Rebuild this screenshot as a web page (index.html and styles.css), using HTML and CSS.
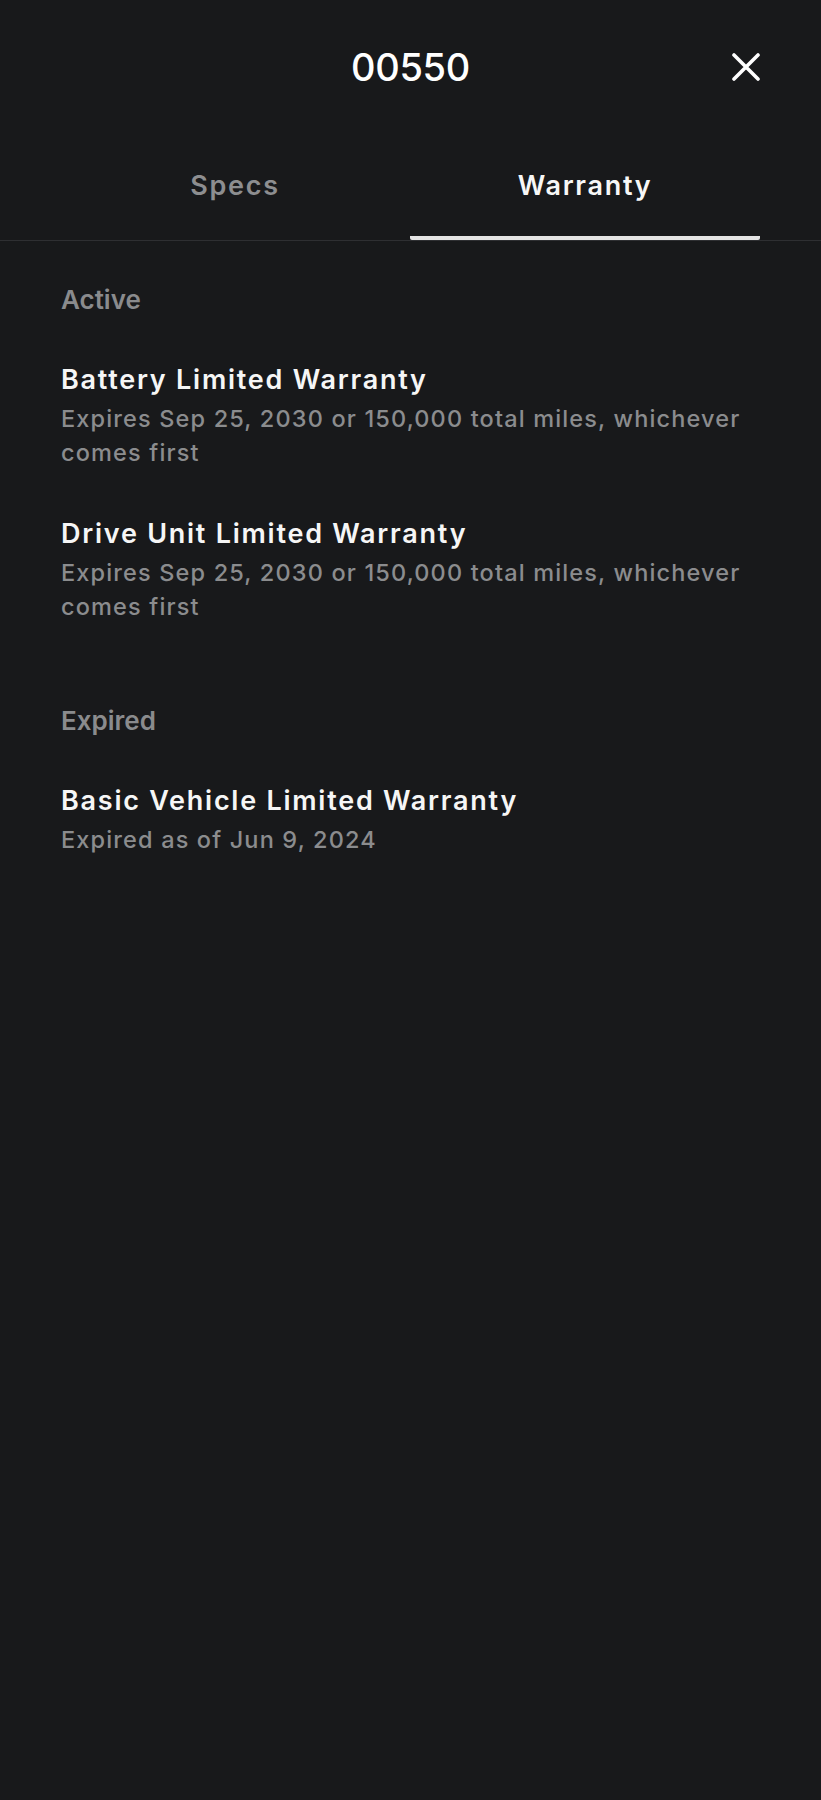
FILE: index.html
```html
<!DOCTYPE html>
<html lang="en">
<head>
<meta charset="utf-8">
<title>00550 Warranty</title>
<link rel="stylesheet" href="styles.css">
</head>
<body>
<div class="screen">
  <header class="header">
    <h1 class="title">00550</h1>
    <button class="close" aria-label="Close">
      <svg viewBox="0 0 28 28" width="28" height="28"><path d="M2 2 L26 26 M26 2 L2 26" stroke="#fff" stroke-width="3.6" stroke-linecap="round" fill="none"/></svg>
    </button>
  </header>
  <nav class="tabs">
    <div class="tab">Specs</div>
    <div class="tab tab-active">Warranty</div>
  </nav>
  <main class="content">
    <section class="section">
      <div class="section-label">Active</div>
      <div class="item">
        <div class="item-title">Battery Limited Warranty</div>
        <div class="item-desc">Expires Sep 25, 2030 or 150,000 total miles, whichever comes first</div>
      </div>
      <div class="item">
        <div class="item-title">Drive Unit Limited Warranty</div>
        <div class="item-desc">Expires Sep 25, 2030 or 150,000 total miles, whichever comes first</div>
      </div>
    </section>
    <section class="section">
      <div class="section-label">Expired</div>
      <div class="item">
        <div class="item-title">Basic Vehicle Limited Warranty</div>
        <div class="item-desc">Expired as of Jun 9, 2024</div>
      </div>
    </section>
  </main>
</div>
</body>
</html>
```
FILE: styles.css
```css
html, body {
  margin: 0;
  padding: 0;
  background: #18191b;
}
body {
  font-family: Inter, "Noto Sans", "Liberation Sans", sans-serif;
  color: #f4f4f4;
  min-height: 1800px;
}
.screen {
  width: 821px;
}
.header {
  position: relative;
  height: 134px;
  display: flex;
  align-items: center;
  justify-content: center;
}
.title {
  margin: 0;
  font-size: 38px;
  line-height: 1;
  font-weight: 500;
  color: #ffffff;
  letter-spacing: -0.3px;
}
.close {
  position: absolute;
  left: 732px;
  top: 53px;
  width: 28px;
  height: 28px;
  padding: 0;
  border: 0;
  background: none;
  display: block;
}
.close svg {
  display: block;
}
.tabs {
  display: flex;
  padding: 0 61px 0 60px;
  border-bottom: 1.5px solid #2e2f32;
}
.tab {
  flex: 1;
  text-align: center;
  font-size: 27px;
  line-height: 1;
  font-weight: 600;
  letter-spacing: 1.7px;
  color: #8d8e90;
  padding: 38px 0 37px;
  border-bottom: 4px solid transparent;
  border-radius: 2px;
}
.tab-active {
  color: #f7f7f7;
  border-bottom-color: #e4e4e4;
}
.content {
  padding: 43px 61px 0 61px;
}
.section + .section {
  margin-top: 81px;
}
.section-label {
  font-size: 26px;
  line-height: 32px;
  font-weight: 600;
  color: #8a8b8d;
}
.item {
  margin-top: 47px;
}
.item-title {
  font-size: 27px;
  line-height: 34px;
  font-weight: 600;
  letter-spacing: 1.75px;
  color: #f6f6f6;
  margin-bottom: 5px;
}
.item-desc {
  font-size: 23.5px;
  line-height: 34px;
  font-weight: 500;
  letter-spacing: 1.15px;
  color: #8b8c8e;
}
```
